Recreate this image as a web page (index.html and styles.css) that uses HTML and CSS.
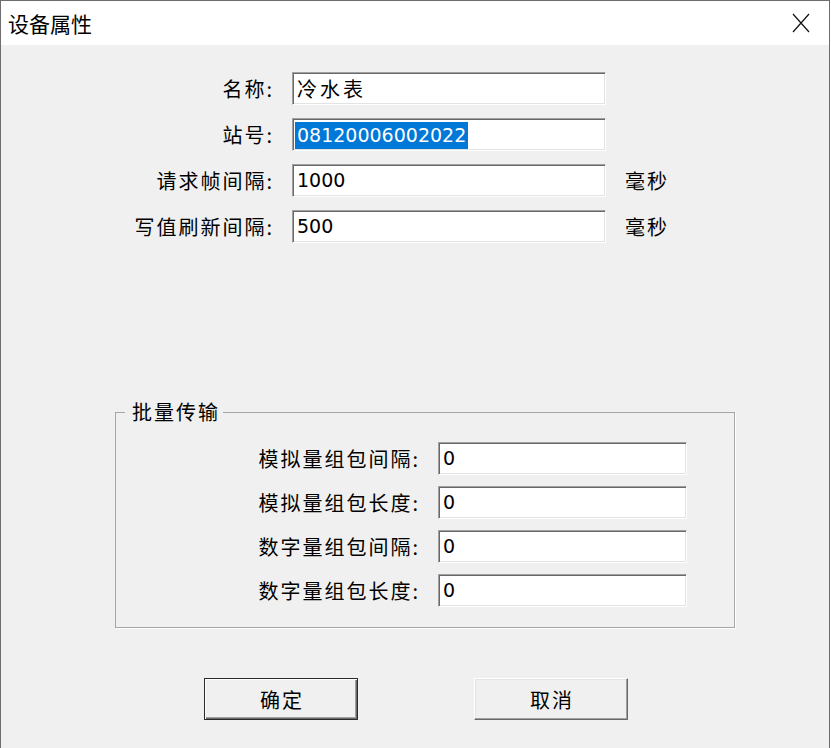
FILE: index.html
```html
<!DOCTYPE html>
<html lang="zh-CN">
<head>
    <meta charset="UTF-8">
    <title>设备属性</title>
    <link rel="stylesheet" href="styles.css">
</head>
<body>
    <div class="dialog">
        <div class="titlebar">
            <span class="title">设备属性</span>
            <span class="close">
                <svg width="18" height="20" viewBox="0 0 18 20"><path d="M1 1L17 19M17 1L1 19" stroke="#111" stroke-width="1.2" fill="none"/></svg>
            </span>
        </div>

        <div class="content">
            <div class="form">
                <div class="row">
                    <label class="label">名称<span class="colon">:</span></label>
                    <div class="field"><span class="cjk">冷水表</span></div>
                </div>
                <div class="row">
                    <label class="label">站号<span class="colon">:</span></label>
                    <div class="field"><span class="sel">08120006002022</span></div>
                </div>
                <div class="row">
                    <label class="label">请求帧间隔<span class="colon">:</span></label>
                    <div class="field">1000</div>
                    <span class="unit">毫秒</span>
                </div>
                <div class="row">
                    <label class="label">写值刷新间隔<span class="colon">:</span></label>
                    <div class="field">500</div>
                    <span class="unit">毫秒</span>
                </div>
            </div>

            <fieldset class="group">
                <legend>批量传输</legend>
                <div class="row">
                    <label class="label">模拟量组包间隔<span class="colon">:</span></label>
                    <div class="field">0</div>
                </div>
                <div class="row">
                    <label class="label">模拟量组包长度<span class="colon">:</span></label>
                    <div class="field">0</div>
                </div>
                <div class="row">
                    <label class="label">数字量组包间隔<span class="colon">:</span></label>
                    <div class="field">0</div>
                </div>
                <div class="row">
                    <label class="label">数字量组包长度<span class="colon">:</span></label>
                    <div class="field">0</div>
                </div>
            </fieldset>

            <div class="buttons">
                <button class="btn btn-default">确定</button>
                <button class="btn">取消</button>
            </div>
        </div>
    </div>
</body>
</html>
```

FILE: styles.css
```css
html, body {
    margin: 0;
    padding: 0;
    background: #fff;
    overflow: hidden;
}
body {
    font-family: "Noto Sans CJK SC", sans-serif;
    color: #000;
}
.dialog {
    width: 830px;
    height: 760px;
    box-sizing: border-box;
    border: 1px solid #6e6e6e;
    border-bottom: none;
    background: #f0f0f0;
}
.titlebar {
    height: 44px;
    background: #fff;
    display: flex;
    align-items: center;
    padding-left: 7px;
}
.title {
    font-size: 21px;
    line-height: 1;
}
.close {
    margin-left: auto;
    margin-right: 19px;
    display: flex;
}
.content {
    padding-top: 27px;
}

/* rows */
.form {
    display: flex;
    flex-direction: column;
    gap: 13px;
}
.row {
    display: flex;
    align-items: center;
    height: 33px;
}
.label {
    font-size: 20px;
    letter-spacing: 2px;
    text-align: right;
    white-space: nowrap;
}
.form .label {
    width: 273px;
    margin-right: 18px;
}
.unit {
    font-size: 20px;
    letter-spacing: 2px;
    margin-left: 19px;
}
.field {
    box-sizing: border-box;
    width: 314px;
    height: 33px;
    background: #fff;
    border: 1px solid;
    border-color: #a0a0a0 #fff #fff #a0a0a0;
    box-shadow: inset 1px 1px 0 #696969, inset -1px -1px 0 #e3e3e3;
    padding-left: 4px;
    font-family: "DejaVu Sans", "Noto Sans CJK SC", sans-serif;
    font-size: 19px;
    line-height: 31px;
    white-space: nowrap;
    overflow: hidden;
}
.field .cjk {
    font-family: "Noto Sans CJK SC", sans-serif;
    font-size: 20px;
    letter-spacing: 3px;
}
.sel {
    display: inline-block;
    margin-left: -2px;
    padding: 0 2px;
    line-height: 27px;
    vertical-align: middle;
    background: #0078d7;
    color: #fff;
}

/* group box */
.group {
    margin: 157px 0 0 114px;
    width: 620px;
    box-sizing: border-box;
    border: 1px solid #a6a6a6;
    box-shadow: 1px 1px 0 #fff;
    padding: 18px 0 20px 0;
    min-inline-size: 0;
    display: flex;
    flex-direction: column;
    gap: 11px;
}
.group legend {
    margin-left: 9px;
    padding: 0 3px 0 7px;
    font-size: 20px;
    letter-spacing: 2px;
    line-height: 24px;
}
.group .label {
    width: 304px;
    margin-right: 18px;
}
.group .field {
    width: 249px;
}

/* buttons */
.buttons {
    display: flex;
    gap: 116px;
    margin: 50px 0 0 203px;
}
.btn {
    width: 154px;
    height: 42px;
    box-sizing: border-box;
    background: #f0f0f0;
    font-family: "Noto Sans CJK SC", sans-serif;
    font-size: 20px;
    letter-spacing: 2px;
    padding: 0 0 0 2px;
    color: #000;
    border: 1px solid;
    border-color: #fff #696969 #696969 #fff;
    box-shadow: inset -1px -1px 0 #a0a0a0, inset 1px 1px 0 #e3e3e3;
}
.btn-default {
    border-color: #2b2b2b;
    box-shadow: inset 1px 1px 0 #fff, inset -1px -1px 0 #696969, inset -2px -2px 0 #a0a0a0;
}
```
